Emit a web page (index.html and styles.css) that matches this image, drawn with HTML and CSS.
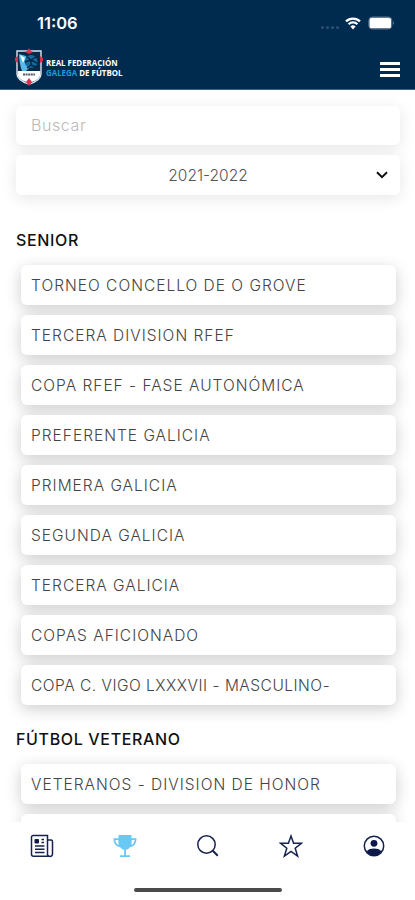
FILE: index.html
```
<!DOCTYPE html>
<html lang="es">
<head>
  <meta charset="UTF-8">
  <meta name="viewport" content="width=device-width, initial-scale=1">
  <title>Real Federación Galega de Fútbol</title>
  <link rel="stylesheet" href="styles.css">
</head>
<body>
  <header class="header">
    <div class="status-bar">
      <span class="clock">11:06</span>
      <div class="status-icons">
        <span class="signal"><i></i><i></i><i></i><i></i></span>
        <svg class="wifi" viewBox="0 0 16 13" width="16" height="13">
          <path d="M1 4.400a10 10 0 0 1 14 0M3.600 7.200a6.300 6.300 0 0 1 8.800 0" fill="none" stroke="#fff" stroke-width="2.200"/>
          <path d="M5.400 9.400a3.800 3.800 0 0 1 5.200 0L8 12.400z" fill="#fff"/>
        </svg>
        <svg class="battery" viewBox="0 0 27 14" width="27" height="14">
          <rect x=".8" y="1" width="23" height="12" rx="3.500" fill="none" stroke="#5f788f"/>
          <rect x="1.500" y="1.700" width="21.600" height="10.600" rx="2.600" fill="#fff"/>
          <path d="M25.200 5q1.500 2 0 4z" fill="#8295a8"/>
        </svg>
      </div>
    </div>
    <div class="nav-bar">
      <div class="brand">
        <svg class="crest" viewBox="0 0 28 38" width="28" height="38">
          <path d="M2 3h24v23c0 5-5 8-12 10C7 34 2 31 2 26z" fill="#07294a" stroke="#dce6ef" stroke-width="1.400"/>
          <path d="M4 6l7 2 3 12-3 3H7C5 17 4 12 4 6z" fill="#58b9e9"/>
          <path d="M5 7l5 3-2 5z" fill="#fff"/>
          <circle cx="16" cy="13.500" r="6.500" fill="#146b9e"/>
          <path d="M12 9l4 3 5-3M16 12v5l-4 3M16 17l5 2M10 14l6-2 6 3" fill="none" stroke="#062443" stroke-width="1.400"/>
          <path d="M2.700 23h22.600v3c0 4-4 7-11.300 8.800C6.700 33 2.700 30 2.700 26z" fill="#fff"/>
          <path d="M8 26.500h12" stroke="#4d5a70" stroke-width="2" stroke-dasharray="2 .6"/>
          <path d="M14 0l1.500 2.500L18 4l-4 2-4-2 2.500-1.500zM0 10l3-2v7l-3-2zM28 10l-3-2v7l3-2zM14 30l3 4-3 4-3-4z" fill="#d8304d"/>
        </svg>
        <div class="brand-name">
          <div class="brand-top">REAL FEDERACIÓN</div>
          <div class="brand-bottom"><span>GALEGA</span> DE FÚTBOL</div>
        </div>
      </div>
      <div class="menu-btn"><i></i><i></i><i></i></div>
    </div>
  </header>

  <main class="content">
    <input class="search" type="text" placeholder="Buscar">
    <div class="season">
      <span>2021-2022</span>
      <svg viewBox="0 0 12 8" width="12" height="8"><path d="M1 1.200l5 5 5-5" fill="none" stroke="#111" stroke-width="2"/></svg>
    </div>

    <h2>SENIOR</h2>
    <ul class="list">
      <li>TORNEO CONCELLO DE O GROVE</li>
      <li>TERCERA DIVISION RFEF</li>
      <li>COPA RFEF - FASE AUTONÓMICA</li>
      <li>PREFERENTE GALICIA</li>
      <li>PRIMERA GALICIA</li>
      <li>SEGUNDA GALICIA</li>
      <li>TERCERA GALICIA</li>
      <li>COPAS AFICIONADO</li>
      <li class="long">COPA C. VIGO LXXXVII - MASCULINO-</li>
    </ul>

    <h2>FÚTBOL VETERANO</h2>
    <ul class="list">
      <li>VETERANOS - DIVISION DE HONOR</li>
      <li></li>
    </ul>
  </main>

  <footer class="footer">
    <nav class="tabs">
      <!-- news -->
      <svg viewBox="0 0 24 24">
        <path d="M17.500 1.500v18.500a2 2 0 0 0 2 2.300H3.500a2 2 0 0 1-2-2V3a1.500 1.500 0 0 1 1.500-1.500zM17.500 6H21a1.500 1.500 0 0 1 1.500 1.500V20a2.300 2.300 0 0 1-3 2.300" class="line"/>
        <path d="M11.500 5.500H14M11.500 8.500H14M5 12h9.500M5 15.300h9.500M5 18.600h9.500" class="line"/>
        <rect x="4.500" y="5" width="4.500" height="4.500" rx="1" class="solid"/>
      </svg>
      <!-- competitions -->
      <svg viewBox="0 0 24 24" class="active">
        <path d="M5.500 1h13v3.200H23.500c0 5-2 8.300-6.300 8.800-1.200 1.700-2.700 2.500-4.200 2.800v5.400H17V23H7v-1.800h4.200v-5.400C9.700 15.500 8.200 14.700 7 13 2.500 12.500.5 9.200.5 4.200h5zM2.400 6c.3 2.700 1.300 4.300 3.300 5C5.400 9.700 5.300 8 5.300 6zM21.600 6h-2.900c0 2-.1 3.700-.4 5 2-.7 3-2.300 3.300-5z" fill-rule="evenodd"/>
      </svg>
      <!-- search -->
      <svg viewBox="0 0 24 24">
        <circle cx="10.500" cy="10.500" r="8.700" class="line"/>
        <path d="M16.800 16.800l5 5" class="line thick"/>
      </svg>
      <!-- favourites -->
      <svg viewBox="0 0 24 24">
        <path d="M12 2l2.600 7.200h8l-6.400 5 2.400 7.800L12 17.300 5.400 22l2.400-7.800-6.400-5h8z" class="line"/>
      </svg>
      <!-- profile -->
      <svg viewBox="0 0 24 24">
        <circle cx="12" cy="12" r="9.700" class="line"/>
        <circle cx="12" cy="9.300" r="3.400" class="solid"/>
        <path d="M4.500 17.500c2-2.400 4.500-3 7.500-3s5.500.6 7.500 3c-2 3-4.500 4.400-7.500 4.400s-5.500-1.400-7.500-4.400z" class="solid"/>
      </svg>
    </nav>
    <div class="home-indicator"></div>
  </footer>
</body>
</html>
```

FILE: styles.css
```
* {
  box-sizing: border-box;
}

body {
  margin: 0;
  height: 900px;
  display: flex;
  flex-direction: column;
  overflow: hidden;
  background: #fff;
  font-family: Inter, "Liberation Sans", sans-serif;
}

.header {
  height: 90px;
  flex-shrink: 0;
  background: #002b4f;
  color: #fff;
  border-bottom: 1px solid #405f7c;
}

.status-bar {
  height: 46px;
  padding: 0 20px 0 37px;
  display: flex;
  align-items: center;
  justify-content: space-between;
}

.clock {
  font-size: 16.5px;
  font-weight: 600;
}

.status-icons {
  display: flex;
  align-items: center;
}

.signal {
  display: flex;
  gap: 2px;
  margin: 8px 6px 0 0;
}

.signal i {
  width: 3px;
  height: 3px;
  border-radius: 50%;
  background: #2c5071;
}

.battery {
  margin-left: 7px;
}

.nav-bar {
  height: 43px;
  padding: 0 15px;
  display: flex;
  align-items: center;
  justify-content: space-between;
}

.brand {
  display: flex;
  align-items: center;
  gap: 3px;
}

.crest {
  margin-top: -2px;
}

.brand-name {
  font-family: "Open Sans", sans-serif;
  font-size: 7.9px;
  font-weight: 700;
  line-height: 10px;
  white-space: nowrap;
}

.brand-bottom span {
  color: #159bdc;
}

.menu-btn {
  width: 20px;
  display: flex;
  flex-direction: column;
  gap: 3px;
  margin-top: 4px;
}

.menu-btn i {
  height: 3px;
  background: #fff;
}

.content {
  flex: 1;
  min-height: 0;
  padding: 16px 15px 0 16px;
  overflow: hidden;
}

.search,
.season {
  display: flex;
  width: 100%;
  height: 40px;
  border: 0;
  border-radius: 5px;
  background: #fff;
  box-shadow: 0 3px 16px rgba(0, 0, 0, 0.1);
}

.search {
  height: 39px;
  padding: 0 15px 2px;
  font-family: inherit;
  font-size: 16px;
  font-weight: 300;
  letter-spacing: 0.6px;
}

.search::placeholder {
  color: #b9b9b9;
}

.season {
  position: relative;
  margin-top: 10px;
  align-items: center;
  justify-content: center;
  color: #555;
  font-size: 15.5px;
  font-weight: 300;
}

.season svg {
  position: absolute;
  right: 12px;
}

h2 {
  margin: 35px 0 14px;
  font-size: 16px;
  font-weight: 500;
  line-height: 21px;
  letter-spacing: 0.65px;
  color: #111;
}

.list {
  list-style: none;
  margin: 0;
  padding: 0 4px 0 5px;
  display: flex;
  flex-direction: column;
  gap: 10px;
}

.list li {
  position: relative;
  height: 40px;
  padding: 0 10px;
  line-height: 41px;
  border-radius: 6px;
  background: #fff;
  box-shadow: 0 4px 16px rgba(0, 0, 0, 0.2);
  color: #444;
  font-size: 15.5px;
  font-weight: 300;
  letter-spacing: 1px;
  white-space: nowrap;
}

.list li.long {
  letter-spacing: 0.5px;
}

.list + h2 {
  margin-top: 24px;
}

.footer {
  position: relative;
  height: 78px;
  flex-shrink: 0;
  background: #fff;
}

.tabs {
  display: flex;
  justify-content: space-around;
  padding-top: 12px;
}

.tabs svg {
  width: 24px;
  height: 24px;
}

.line {
  fill: none;
  stroke: #16234f;
  stroke-width: 1.5;
}

.thick {
  stroke-width: 2;
}

.solid {
  fill: #0d194b;
}

.active {
  fill: #69c8f4;
}

.home-indicator {
  width: 148px;
  height: 4px;
  margin: 30px auto 0;
  border-radius: 2px;
  background: #4b4b4b;
}
```
